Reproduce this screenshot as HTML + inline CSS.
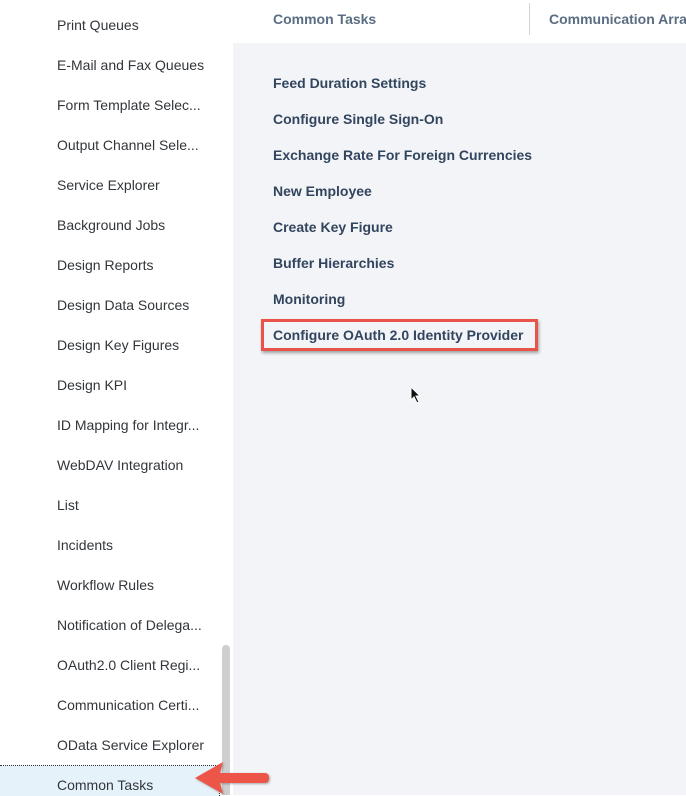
<!DOCTYPE html>
<html><head><style>
body{margin:0;width:686px;height:795px;overflow:hidden;background:#fff;font-family:"Liberation Sans",sans-serif;position:relative}
.side{position:absolute;left:0;top:0;width:233px;height:795px;background:#fff}
.it{position:absolute;left:57px;font-size:14px;color:#32363a;line-height:16px}
.sel{position:absolute;left:0;top:765px;width:219px;height:30px;background:#e6f2f9;border-top:1px dotted #333;border-right:1px dotted #333}
.sb{position:absolute;left:222px;top:645px;width:8px;height:150px;background:#cfcfcf;border-radius:4px 4px 0 0}
.main{position:absolute;left:233px;top:43px;width:453px;height:752px;background:#f3f4f7}
.tab{position:absolute;top:11px;font-size:14px;font-weight:bold;color:#5b6d82}
.lk{position:absolute;left:273px;font-size:14px;font-weight:bold;color:#32455e;line-height:16px}
</style></head><body>
<div class="side"></div>
<div class="sel"></div>
<div class="sb"></div>
<div class="it" style="top:17px">Print Queues</div>
<div class="it" style="top:57px">E-Mail and Fax Queues</div>
<div class="it" style="top:97px">Form Template Selec...</div>
<div class="it" style="top:137px">Output Channel Sele...</div>
<div class="it" style="top:177px">Service Explorer</div>
<div class="it" style="top:217px">Background Jobs</div>
<div class="it" style="top:257px">Design Reports</div>
<div class="it" style="top:297px">Design Data Sources</div>
<div class="it" style="top:337px">Design Key Figures</div>
<div class="it" style="top:377px">Design KPI</div>
<div class="it" style="top:417px">ID Mapping for Integr...</div>
<div class="it" style="top:457px">WebDAV Integration</div>
<div class="it" style="top:497px">List</div>
<div class="it" style="top:537px">Incidents</div>
<div class="it" style="top:577px">Workflow Rules</div>
<div class="it" style="top:617px">Notification of Delega...</div>
<div class="it" style="top:657px">OAuth2.0 Client Regi...</div>
<div class="it" style="top:697px">Communication Certi...</div>
<div class="it" style="top:737px">OData Service Explorer</div>
<div class="it" style="top:777px">Common Tasks</div>
<div class="tab" style="left:273px">Common Tasks</div>
<div style="position:absolute;left:529px;top:3px;width:1px;height:32px;background:#d0d4d9"></div>
<div class="tab" style="left:549px;width:137px;overflow:hidden;white-space:nowrap">Communication Arra</div>
<div class="main"></div>
<div class="lk" style="top:75px">Feed Duration Settings</div>
<div class="lk" style="top:111px">Configure Single Sign-On</div>
<div class="lk" style="top:147px">Exchange Rate For Foreign Currencies</div>
<div class="lk" style="top:183px">New Employee</div>
<div class="lk" style="top:219px">Create Key Figure</div>
<div class="lk" style="top:255px">Buffer Hierarchies</div>
<div class="lk" style="top:291px">Monitoring</div>
<div style="position:absolute;left:261px;top:319px;width:271px;height:26px;border:3px solid #e8534a;box-shadow:1px 2px 3px rgba(0,0,0,.35)"></div>
<div class="lk" style="top:327px">Configure OAuth 2.0 Identity Provider</div>
<svg style="position:absolute;left:409px;top:386px" width="14" height="18"><path d="M2 1 L2 14 L5 11 L8 17 L10 16 L7 10 L11 10 Z" fill="#111" stroke="#fff" stroke-width="1"/></svg>
<svg style="position:absolute;left:190px;top:755px" width="85" height="40"><g filter="drop-shadow(1px 1px 1px rgba(0,0,0,.3))"><path d="M5 23 L33 7 L30 18 L75 18 Q79 18 79 23 Q79 28 75 28 L30 28 L33 39 Z" fill="#ee5549"/></g></svg>
</body></html>
